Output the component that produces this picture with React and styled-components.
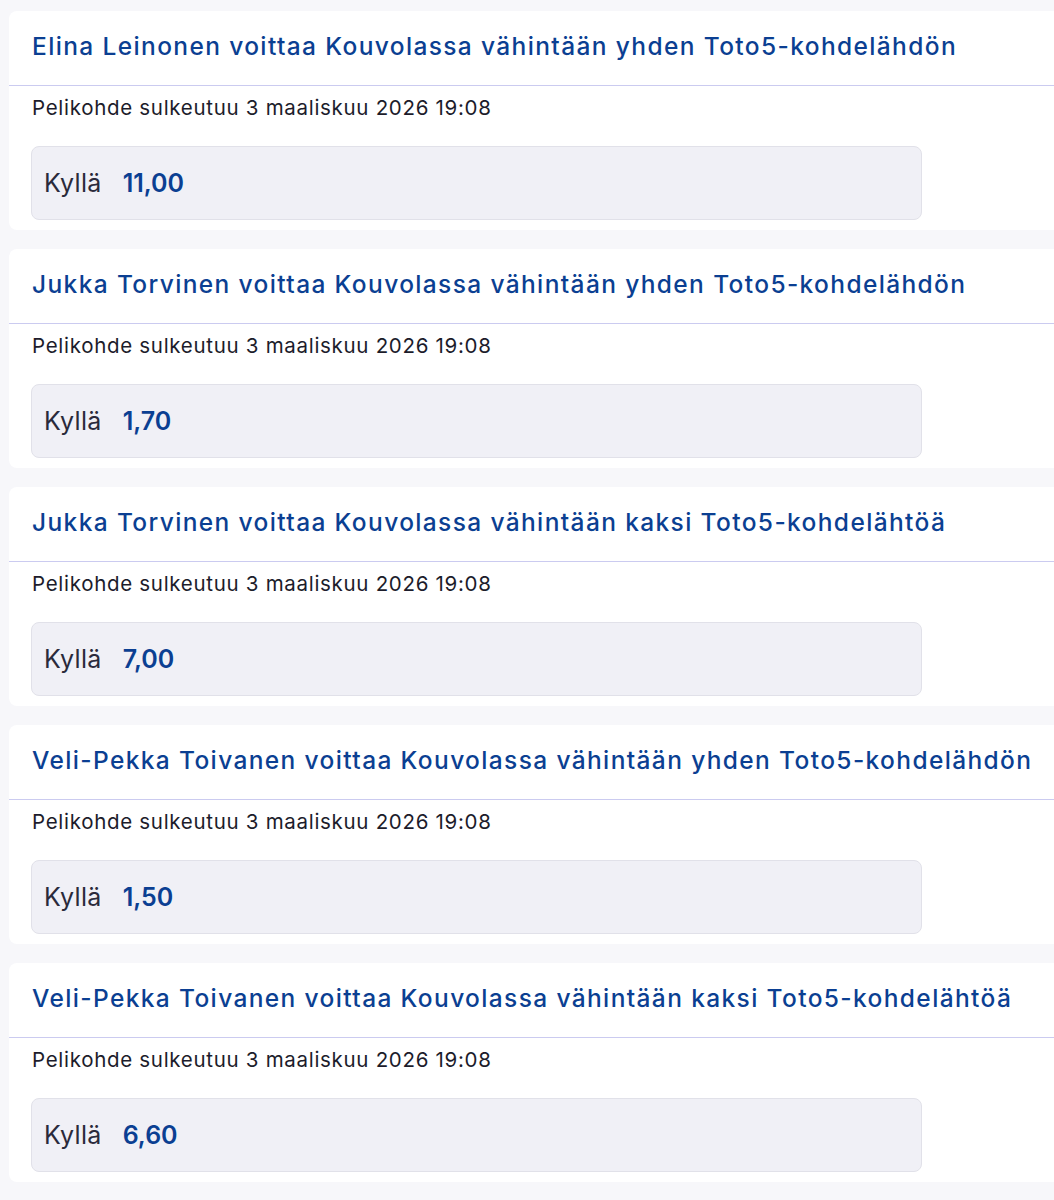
import React from "react";
import styled, { createGlobalStyle } from "styled-components";

const markets = [
  { title: "Elina Leinonen voittaa Kouvolassa vähintään yhden Toto5-kohdelähdön", odds: "11,00" },
  { title: "Jukka Torvinen voittaa Kouvolassa vähintään yhden Toto5-kohdelähdön", odds: "1,70" },
  { title: "Jukka Torvinen voittaa Kouvolassa vähintään kaksi Toto5-kohdelähtöä", odds: "7,00" },
  { title: "Veli-Pekka Toivanen voittaa Kouvolassa vähintään yhden Toto5-kohdelähdön", odds: "1,50" },
  { title: "Veli-Pekka Toivanen voittaa Kouvolassa vähintään kaksi Toto5-kohdelähtöä", odds: "6,60" },
];

export default function App() {
  return (
    <>
      <GlobalStyle />
      <List>
        {markets.map((m) => (
          <Card key={m.title}>
            <Header>
              <Title>{m.title}</Title>
            </Header>
            <Closes>Pelikohde sulkeutuu 3 maaliskuu 2026 19:08</Closes>
            <OddsButton>
              <Outcome>Kyllä</Outcome>
              <Price>{m.odds}</Price>
            </OddsButton>
          </Card>
        ))}
      </List>
    </>
  );
}

const GlobalStyle = createGlobalStyle`
  html, body {
    margin: 0;
    background: #f7f7fa;
    overflow-x: hidden;
  }
  body {
    font-family: Inter, "Noto Sans", sans-serif;
  }
`;

const List = styled.div`
  display: flex;
  flex-direction: column;
  gap: 19px;
  padding: 11px 0 0 9px;
`;

const Card = styled.section`
  width: 1070px;
  height: 219px;
  box-sizing: border-box;
  background: #ffffff;
  border-radius: 8px;
  padding-bottom: 10px;
`;

const Header = styled.div`
  height: 75px;
  box-sizing: border-box;
  display: flex;
  align-items: center;
  padding: 0 0 4px 23px;
  border-bottom: 1px solid #cbcbf0;
`;

const Title = styled.h2`
  margin: 0;
  font-size: 24.5px;
  font-weight: 500;
  color: #0b3f92;
  letter-spacing: 1.37px;
  white-space: nowrap;
`;

const Closes = styled.div`
  padding: 10px 0 0 23px;
  line-height: 24px;
  font-size: 20.5px;
  letter-spacing: 0.7px;
  color: #1c1c2b;
`;

const OddsButton = styled.div`
  margin: 26px 0 0 22px;
  width: 891px;
  height: 74px;
  box-sizing: border-box;
  display: flex;
  align-items: center;
  gap: 21px;
  padding-left: 12px;
  background: #f0f0f6;
  border: 1px solid #e1e1e9;
  border-radius: 8px;
`;

const Outcome = styled.span`
  font-size: 25px;
  letter-spacing: 0.3px;
  color: #2a2a3b;
`;

const Price = styled.span`
  font-size: 25px;
  font-weight: 600;
  color: #0b3f92;
`;
